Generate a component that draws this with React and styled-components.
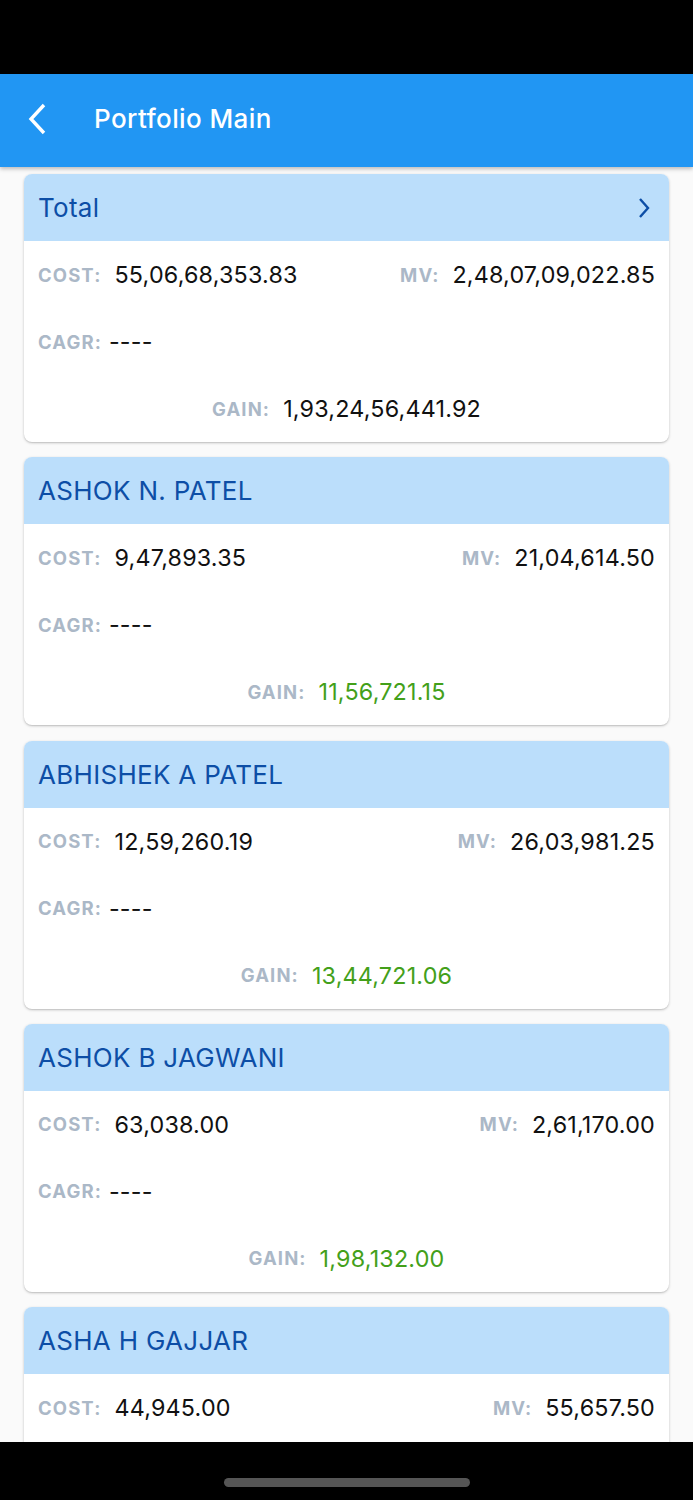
import React from "react";
import styled, { createGlobalStyle } from "styled-components";

const Global = createGlobalStyle`
  html, body { margin: 0; padding: 0; background: #fafafa; }
  body { font-family: Inter, "Noto Sans", sans-serif; -webkit-font-smoothing: antialiased; }
  * { box-sizing: border-box; }
`;

const Screen = styled.div`
  height: 1500px;
  overflow: hidden;
  display: flex;
  flex-direction: column;
  background: #fafafa;
`;

const StatusBar = styled.div`
  height: 74px;
  flex: none;
  background: #000;
`;

const AppBar = styled.header`
  height: 93px;
  flex: none;
  background: #2196f3;
  display: flex;
  align-items: center;
  padding: 0 0 4px 24px;
  gap: 46px;
  box-shadow: 0 2px 4px rgba(0, 0, 0, 0.25);
  position: relative;
  z-index: 1;
`;

const Title = styled.h1`
  margin: 0;
  font-size: 26px;
  font-weight: 500;
  color: #fff;
  letter-spacing: 0.4px;
`;

const List = styled.main`
  flex: 1;
  padding: 7px 24px 0;
  display: flex;
  flex-direction: column;
  gap: 15.25px;
`;

const Card = styled.section`
  background: #fff;
  border-radius: 8px;
  box-shadow: 0 1px 3px rgba(0, 0, 0, 0.2), 0 1px 1px rgba(0, 0, 0, 0.08);
  overflow: hidden;
  flex: none;
`;

const CardHeader = styled.div`
  height: 67px;
  background: #bbdefb;
  display: flex;
  align-items: center;
  justify-content: space-between;
  padding: 0 18px 0 14px;
`;

const Name = styled.span`
  font-size: 26px;
  color: #0d4ea6;
  font-weight: 400;
  letter-spacing: 0.3px;
`;

const Row = styled.div`
  height: 67px;
  display: flex;
  align-items: center;
  justify-content: ${(p) => p.$justify || "space-between"};
  padding: 0 14px;
`;

const Field = styled.div`
  display: flex;
  align-items: center;
  gap: ${(p) => (p.$tight ? "7px" : "13px")};
`;

const Label = styled.span`
  font-size: 18.5px;
  font-weight: 700;
  color: #abb8c7;
  letter-spacing: 1.1px;
`;

const Value = styled.span`
  font-size: 23.3px;
  color: ${(p) => (p.$positive ? "#43a01a" : "#111")};
  letter-spacing: 0.2px;
`;

const BottomBar = styled.div`
  position: fixed;
  left: 0;
  right: 0;
  bottom: 0;
  height: 58px;
  background: #000;
  display: flex;
  justify-content: center;
  padding-top: 36px;
  z-index: 2;
`;

const Handle = styled.div`
  width: 246px;
  height: 9px;
  border-radius: 5px;
  background: #555;
`;

const BackIcon = () => (
  <svg width="24" height="34" viewBox="0 0 24 34" fill="none">
    <path d="M20 3 L7 17 L20 31" stroke="#fff" strokeWidth="3.4" />
  </svg>
);

const ChevronRight = () => (
  <svg width="14" height="22" viewBox="0 0 14 22" fill="none">
    <path d="M3 2 L11 11 L3 20" stroke="#0d4ea6" strokeWidth="2.4" />
  </svg>
);

const data = [
  { name: "Total", cost: "55,06,68,353.83", mv: "2,48,07,09,022.85", gain: "1,93,24,56,441.92", total: true },
  { name: "ASHOK N. PATEL", cost: "9,47,893.35", mv: "21,04,614.50", gain: "11,56,721.15" },
  { name: "ABHISHEK A PATEL", cost: "12,59,260.19", mv: "26,03,981.25", gain: "13,44,721.06" },
  { name: "ASHOK B JAGWANI", cost: "63,038.00", mv: "2,61,170.00", gain: "1,98,132.00" },
  { name: "ASHA H GAJJAR", cost: "44,945.00", mv: "55,657.50", gain: "11,712.50" },
];

export default function App() {
  return (
    <>
      <Global />
      <Screen>
        <StatusBar />
        <AppBar>
          <BackIcon />
          <Title>Portfolio Main</Title>
        </AppBar>
        <List>
          {data.map((d) => (
            <Card key={d.name}>
              <CardHeader>
                <Name>{d.name}</Name>
                {d.total && <ChevronRight />}
              </CardHeader>
              <Row>
                <Field>
                  <Label>COST:</Label>
                  <Value>{d.cost}</Value>
                </Field>
                <Field>
                  <Label>MV:</Label>
                  <Value>{d.mv}</Value>
                </Field>
              </Row>
              <Row>
                <Field $tight>
                  <Label>CAGR:</Label>
                  <Value>----</Value>
                </Field>
              </Row>
              <Row $justify="center">
                <Field>
                  <Label>GAIN:</Label>
                  <Value $positive={!d.total}>{d.gain}</Value>
                </Field>
              </Row>
            </Card>
          ))}
        </List>
        <BottomBar>
          <Handle />
        </BottomBar>
      </Screen>
    </>
  );
}
